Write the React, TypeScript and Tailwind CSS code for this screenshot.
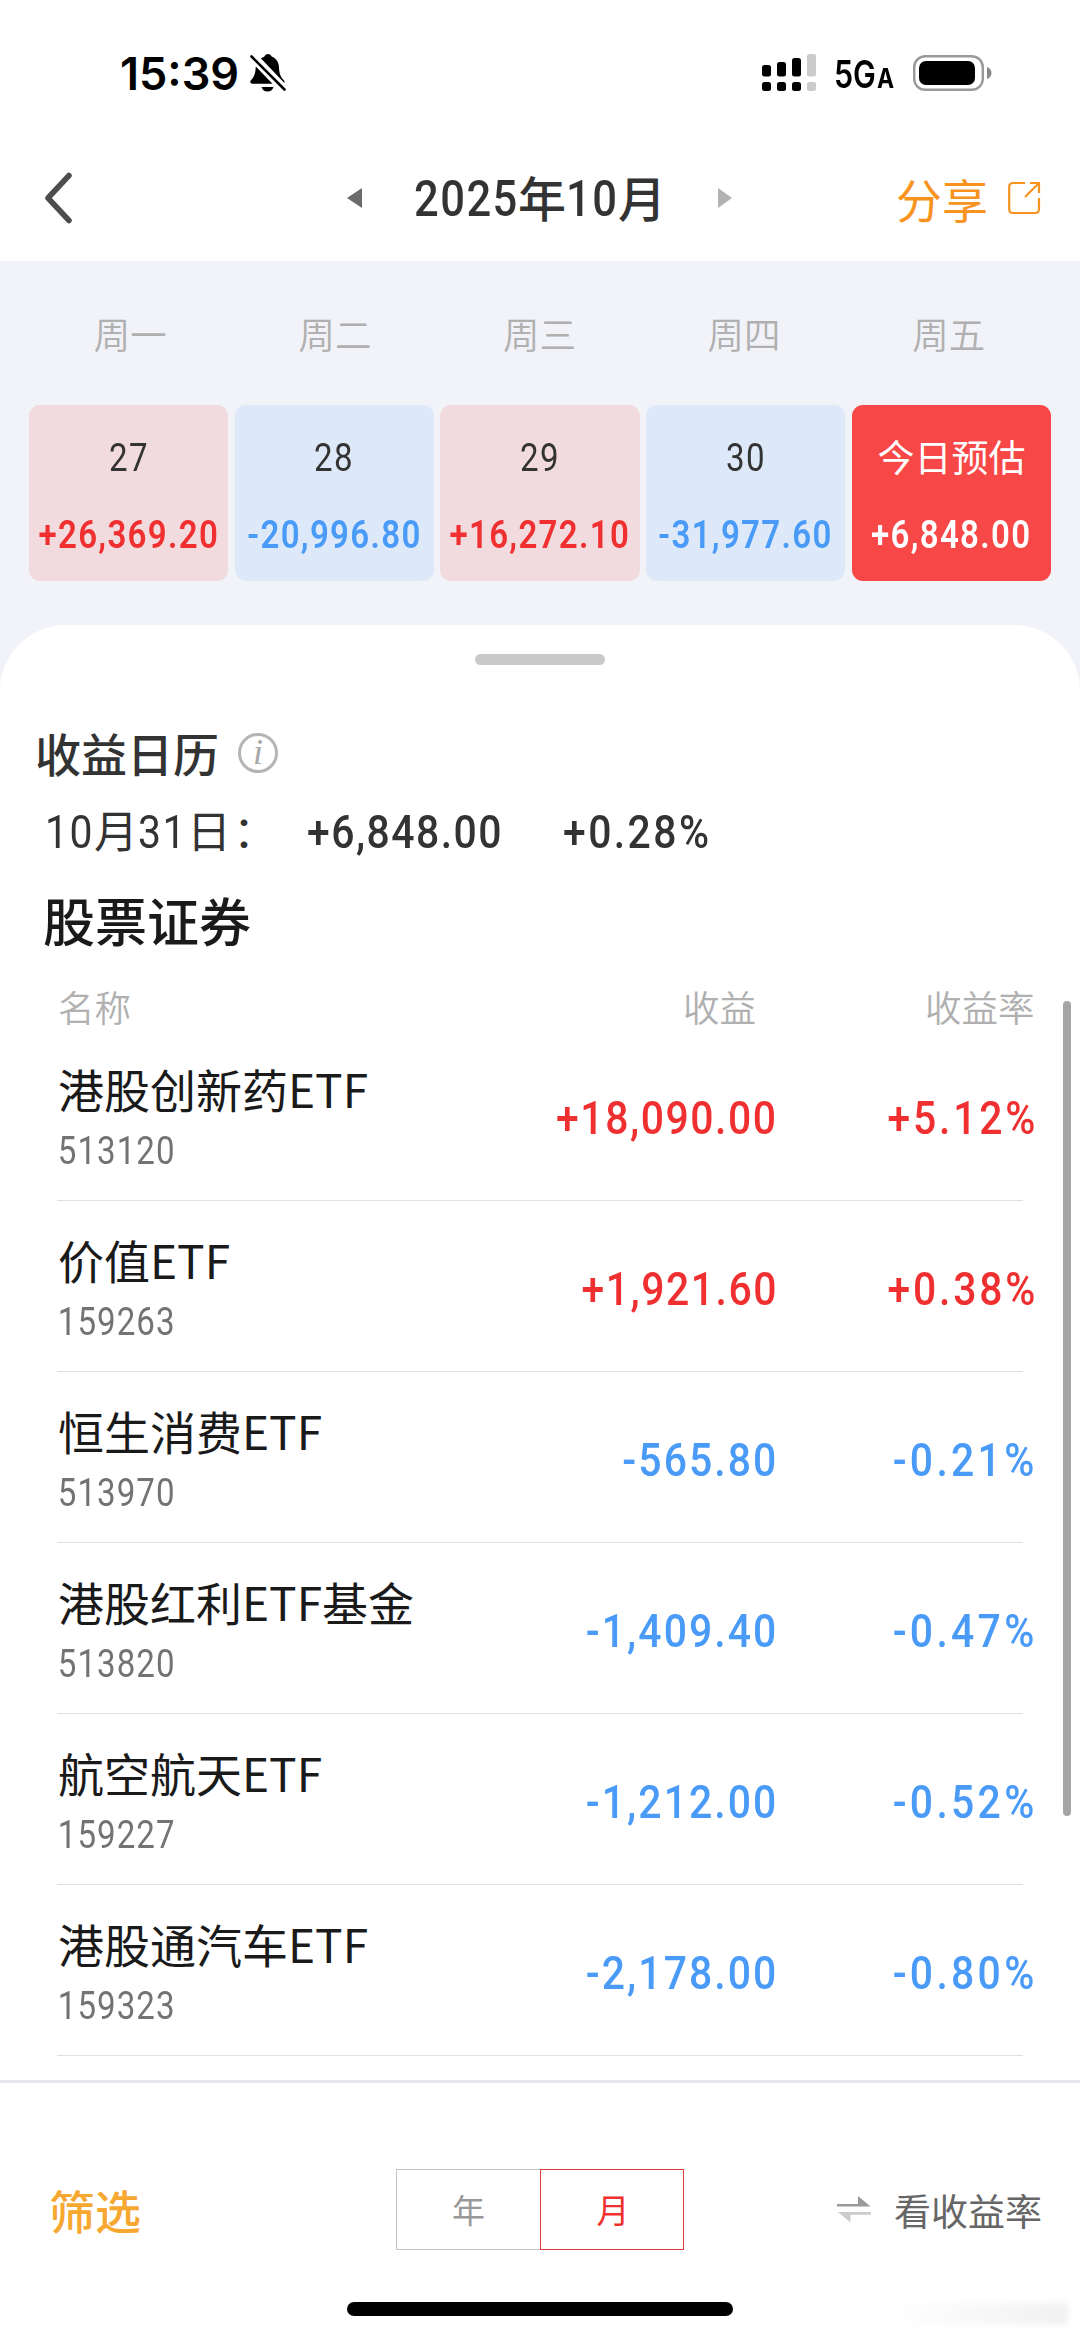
import type { ReactNode } from 'react';
import clsx from 'clsx';

interface Day {
  label: string;
  value: string;
  today?: boolean;
}

interface Holding {
  name: string;
  code: string;
  profit: string;
  rate: string;
}

const weekdays = ['周一', '周二', '周三', '周四', '周五'];

const days: Day[] = [
  { label: '27', value: '+26,369.20' },
  { label: '28', value: '-20,996.80' },
  { label: '29', value: '+16,272.10' },
  { label: '30', value: '-31,977.60' },
  { label: '今日预估', value: '+6,848.00', today: true },
];

const holdings: Holding[] = [
  { name: '港股创新药ETF', code: '513120', profit: '+18,090.00', rate: '+5.12%' },
  { name: '价值ETF', code: '159263', profit: '+1,921.60', rate: '+0.38%' },
  { name: '恒生消费ETF', code: '513970', profit: '-565.80', rate: '-0.21%' },
  { name: '港股红利ETF基金', code: '513820', profit: '-1,409.40', rate: '-0.47%' },
  { name: '航空航天ETF', code: '159227', profit: '-1,212.00', rate: '-0.52%' },
  { name: '港股通汽车ETF', code: '159323', profit: '-2,178.00', rate: '-0.80%' },
];

const isGain = (value: string) => value.startsWith('+');

// Narrow figures: Roboto squeezed sideways
const Num = ({
  children,
  className,
  tracking = 'tracking-[1.7px]',
}: {
  children: ReactNode;
  className?: string;
  tracking?: string;
}) => (
  <span
    className={clsx(
      "inline-block scale-x-[0.87] whitespace-nowrap font-['Roboto',sans-serif]",
      tracking,
      className
    )}
  >
    {children}
  </span>
);

const StatusBar = () => (
  <div className="flex h-[146px] items-center pl-[120px] text-black">
    <span className="w-[130px] font-['Inter',sans-serif] text-[45px] leading-none font-semibold">15:39</span>
    <svg className="h-[38px] w-[36px]" viewBox="0 0 36 38">
      <path
        d="M11 4.600C12.600 3.600 13.800 3.200 14.400 2.600C15 .9 16.200 0 18 0s3 .9 3.600 2.600C26.500 4.500 28.800 8.300 29 13.500c.2 6 1.400 9 4.600 12.500 1 1.100 1.100 2 .8 3z"
        fill="#000"
      />
      <path d="M5.800 12.500L22.500 29.800H2.200C.5 29.800-.2 28 .7 26.500C4 23 5.500 20 5.800 12.500z" fill="#000" />
      <path d="M11.500 33h12c-1 3-3 4.500-6 4.500s-5-1.500-6-4.500z" fill="#000" />
      <path d="M1.500 2.500L34.500 35.500" stroke="#000" strokeWidth="2.600" strokeLinecap="round" />
    </svg>
    <svg className="ml-[476px] h-[38px] w-[54px]" viewBox="0 0 54 38">
      <rect x="0" y="11" width="9" height="11.500" rx="2.500" />
      <rect x="15" y="8" width="9" height="14.500" rx="2.500" />
      <rect x="30" y="4" width="9" height="18.500" rx="2.500" />
      <rect x="45" y="0" width="9" height="22.500" rx="2" fill="#cbcbcb" />
      <rect x="0" y="28" width="9" height="9" rx="2.500" />
      <rect x="15" y="28" width="9" height="9" rx="2.500" />
      <rect x="30" y="28" width="9" height="9" rx="2.500" />
      <rect x="45" y="28" width="9" height="9" rx="2" fill="#cbcbcb" />
    </svg>
    <span className="mt-[2px] ml-[18px] flex w-[79px] items-baseline leading-none">
      <span className="w-[43px] origin-left scale-x-[0.8] font-['Inter',sans-serif] text-[38px] font-semibold">
        5G
      </span>
      <span className="origin-left scale-x-[0.85] font-['Inter',sans-serif] text-[27px] font-bold">A</span>
    </span>
    <svg className="h-[36px] w-[80px]" viewBox="0 0 80 36">
      <rect x="1.200" y="1.200" width="68.600" height="33.600" rx="11" fill="none" stroke="#999" strokeWidth="2.400" />
      <rect x="6" y="6" width="56" height="24" rx="7" />
      <path d="M74 12c3 1 4.500 3.500 4.500 6s-1.500 5-4.500 6z" fill="#888" />
    </svg>
  </div>
);

const Header = () => (
  <div className="flex h-[115px] items-center pb-[12px] pl-[45px]">
    <svg className="h-[52px] w-[27px]" viewBox="0 0 27 52">
      <path d="M24 3.500L3 26L24 48.500" fill="none" stroke="#4d4d4d" strokeWidth="5.500" strokeLinecap="round" strokeLinejoin="round" />
    </svg>
    <svg className="ml-[275px] h-[20px] w-[15px]" viewBox="0 0 15 20">
      <path d="M15 0V20L0 10z" fill="#6b6b6b" />
    </svg>
    <h1 className="ml-[52px] flex w-[252px] items-center text-[48px] leading-none font-medium text-[#333]">
      <span className="w-[104px]">
        <Num className="origin-left text-[50px]">2025</Num>
      </span>
      <span className="-mt-[3px]">年</span>
      <span className="w-[52px]">
        <Num className="origin-left text-[50px]">10</Num>
      </span>
      <span className="-mt-[3px]">月</span>
    </h1>
    <svg className="ml-[52px] h-[20px] w-[14px]" viewBox="0 0 14 20">
      <path d="M0 0V20L14 10z" fill="#b3b3b3" />
    </svg>
    <button className="ml-[164px] flex items-center text-[#f7931e]">
      <span className="w-[112px] text-left text-[46px] leading-none">分享</span>
      <svg className="h-[34px] w-[34px]" viewBox="0 0 34 34" fill="none" stroke="currentColor" strokeWidth="2.200">
        <path d="M17 2H5Q1.200 2 1.200 6V28Q1.200 32 5 32H27Q31 32 31 28V17" />
        <path d="M22 2H31V12M31 2L17 16" />
      </svg>
    </button>
  </div>
);

const Calendar = () => (
  <div className="h-[364px] bg-[#f2f3f9] px-[29px]">
    <div className="-ml-[1px] grid grid-cols-5 pt-[51px] text-center text-[36.500px] leading-[44px] font-[350] text-[#b0b0b0]">
      {weekdays.map((day) => (
        <span key={day}>{day}</span>
      ))}
    </div>
    <div className="mt-[49px] grid grid-cols-5 gap-[6.500px]">
      {days.map((day) => (
        <div
          key={day.label}
          className={clsx(
            'flex h-[176px] flex-col items-center rounded-[11px] pt-[28px]',
            day.today ? 'bg-[#f84747]' : isGain(day.value) ? 'bg-[#f1dbde]' : 'bg-[#dde9f9]'
          )}
        >
          {day.today ? (
            <span className="-mt-px text-[37px] leading-[48px] text-white">{day.label}</span>
          ) : (
            <Num className="text-[38px] leading-[50px] text-[#333]">{day.label}</Num>
          )}
          <Num
            tracking="tracking-[1.5px]"
            className={clsx(
              'mt-auto mb-[21px] text-[38px] leading-[50px] font-semibold',
              day.today ? 'text-white' : isGain(day.value) ? 'text-[#f03030]' : 'text-[#4a9bf8]'
            )}
          >
            {day.value}
          </Num>
        </div>
      ))}
    </div>
  </div>
);

const Summary = () => (
  <>
    <div className="mt-[57px] flex h-[60px] items-center pl-[35px]">
      <h2 className="w-[203px] text-[46px] leading-none font-medium text-[#333]">收益日历</h2>
      <span className="mt-[2px] flex h-[40px] w-[40px] items-center justify-center rounded-full border-[3px] border-[#b5b5b5] pb-[2px] font-['Liberation_Serif',serif] text-[36px] leading-none text-[#a8a8a8] italic">
        i
      </span>
    </div>
    <div className="mt-[19px] flex h-[60px] items-center pl-[45px] text-[44px] leading-none text-[#333]">
      <span className="w-[49px]">
        <Num className="origin-left text-[47px]">10</Num>
      </span>
      <span className="-mt-[4px] w-[44px]">月</span>
      <span className="w-[49px]">
        <Num className="origin-left text-[47px]">31</Num>
      </span>
      <span className="-mt-[4px] w-[46px]">日</span>
      <span className="-mt-[4px] w-[74px]">：</span>
      <span className="w-[256px]">
        <Num className="origin-left text-[47px] font-medium">+6,848.00</Num>
      </span>
      <Num tracking="tracking-[2.800px]" className="origin-left text-[47px] font-medium">
        +0.28%
      </Num>
    </div>
    <h2 className="mt-[29px] pl-[43px] text-[52px] leading-[60px] font-medium text-[#1a1a1a]">股票证券</h2>
  </>
);

const HoldingRow = ({ holding }: { holding: Holding }) => (
  <div className="mr-[57px] ml-[57px] flex h-[171px] items-center border-b border-[#e0e0e0]">
    <div className="w-[430px] pt-[6px]">
      <div className="pl-px text-[46px] leading-[60px] text-[#1a1a1a]">{holding.name}</div>
      <Num
        tracking="tracking-[1.200px]"
        className="mt-[5px] block origin-left pl-px text-[38px] leading-[56px] text-[#737373]"
      >
        {holding.code}
      </Num>
    </div>
    <div
      className={clsx(
        '-mr-[14px] flex flex-1 justify-end pt-[5px] text-[47px] leading-none font-medium',
        isGain(holding.profit) ? 'text-[#f03030]' : 'text-[#4a9bf8]'
      )}
    >
      <Num
        tracking={isGain(holding.profit) ? 'tracking-[1.800px]' : 'tracking-[2.400px]'}
        className="origin-right"
      >
        {holding.profit}
      </Num>
      <span className="flex w-[259px] justify-end">
        <Num
          tracking={isGain(holding.rate) ? 'tracking-[3.200px]' : 'tracking-[3.800px]'}
          className="-mr-px origin-right"
        >
          {holding.rate}
        </Num>
      </span>
    </div>
  </div>
);

const Footer = () => (
  <div className="relative h-[259px] border-t-[3px] border-[#e5e6f0] bg-white">
    <div className="flex h-[254px] items-center pb-[1px] pl-[49px]">
      <button className="w-[347px] pb-[2px] text-left text-[46px] leading-none font-medium text-[#f7a830]">筛选</button>
      <div className="flex text-[33px] leading-none">
        <button className="h-[81px] w-[144px] border border-r-0 border-[#c4c4c4] text-[#999]">年</button>
        <button className="h-[81px] w-[144px] border border-[#e03c3c] pl-[2px] text-[#f02f2f]">月</button>
      </div>
      <button className="ml-[153px] flex items-center text-[#666]">
        <svg className="h-[27px] w-[34px]" viewBox="0 0 34 27">
          <path d="M0 8H21V0L33.500 10.500H0z" fill="#999" />
          <path d="M34 16H1L13.500 26.500V18.800H34z" fill="#ccc" />
        </svg>
        <span className="ml-[23px] pt-[2px] text-[37px] leading-none">看收益率</span>
      </button>
    </div>
    <div className="absolute top-[219px] left-[347px] h-[14px] w-[386px] rounded-full bg-black" />
    <div className="absolute top-[220px] left-[890px] h-[22px] w-[178px] bg-linear-to-r from-white to-[#f1f1f1] blur-[3px]" />
  </div>
);

export default function App() {
  return (
    <div className="h-[2339px] w-[1080px] overflow-hidden bg-white font-['Noto_Sans_CJK_SC',sans-serif]">
      <StatusBar />
      <Header />
      <Calendar />
      <div className="h-[1455px] bg-[#f2f3f9]">
        <div className="relative h-full overflow-hidden rounded-t-[66px] bg-white">
          <div className="mx-auto mt-[29px] h-[11px] w-[130px] rounded-full bg-[#c9c9c9]" />
          <Summary />
          <div className="mt-[33px] flex pl-[58px] text-[36.500px] leading-[47px] font-[350] text-[#b0b0b0]">
            <span className="w-[625px]">名称</span>
            <span className="w-[242px]">收益</span>
            <span>收益率</span>
          </div>
          {holdings.map((holding) => (
            <HoldingRow key={holding.code} holding={holding} />
          ))}
          <div className="absolute top-[376px] right-[9px] h-[815px] w-[8px] rounded-full bg-[#a5a5a5]" />
        </div>
      </div>
      <Footer />
    </div>
  );
}
